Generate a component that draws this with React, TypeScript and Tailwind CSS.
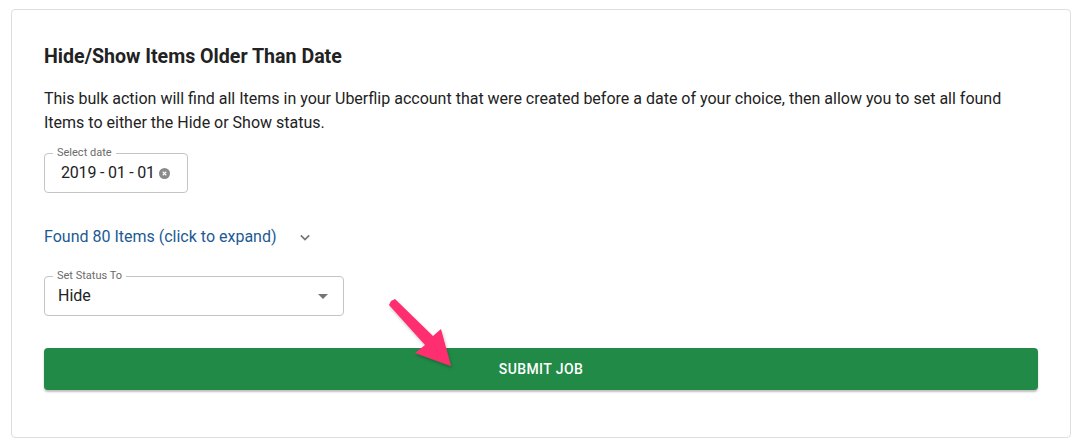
import React from "react";

const font = { fontFamily: "Roboto, 'Noto Sans', Arial, sans-serif" };

function OutlinedField({
  label,
  width,
  children,
}: {
  label: string;
  width: string;
  children: React.ReactNode;
}) {
  return (
    <div className={`relative h-[40px] rounded border border-[#c4c4c4] ${width}`}>
      <span className="absolute -top-[8px] left-[8px] bg-white px-[4px] text-[11px] leading-[14px] text-[#6b6b6b]">
        {label}
      </span>
      <div className="flex h-full items-center">{children}</div>
    </div>
  );
}

export default function App() {
  return (
    <div className="relative min-h-[446px] bg-white pl-[11px] pt-[9px]" style={font}>
      <div className="h-[429px] w-[1060px] rounded border border-[#dedede] px-[32px] pt-[35px]">
        <h2 className="text-[19.6px] font-bold leading-[24px] text-[#222]">Hide/Show Items Older Than Date</h2>
        <p className="mt-[18px] text-[16px] leading-[24px] text-[#222]">
          This bulk action will find all Items in your Uberflip account that were created before a date of your choice,
          then allow you to set all found Items to either the Hide or Show status.
        </p>

        <div className="mt-[18px]">
          <OutlinedField label="Select date" width="w-[144px]">
            <span className="pl-[16px] text-[16px] tracking-[-0.2px] text-[#222]">2019 - 01 - 01</span>
            <span className="ml-[4px] flex h-[11px] w-[11px] items-center justify-center rounded-full bg-[#8a8a8a]">
              <svg viewBox="0 0 10 10" className="h-[7px] w-[7px]">
                <path d="M2.5 2.5 L7.5 7.5 M7.5 2.5 L2.5 7.5" stroke="#fff" strokeWidth="1.6" />
              </svg>
            </span>
          </OutlinedField>
        </div>

        <div className="mt-[32px] flex h-[24px] items-center">
          <span className="text-[16px] leading-[24px] text-[#1c5a94]">Found 80 Items (click to expand)</span>
          <svg viewBox="0 0 24 24" className="ml-[18px] h-[20px] w-[20px]" fill="none">
            <path d="M7 10l5 5 5-5" stroke="#757575" strokeWidth="2" />
          </svg>
        </div>

        <div className="mt-[27px]">
          <OutlinedField label="Set Status To" width="w-[300px]">
            <span className="flex-1 pl-[13px] text-[16px] text-[#222]">Hide</span>
            <svg viewBox="0 0 10 5" className="mr-[15px] h-[5px] w-[10px]">
              <path d="M0 0h10L5 5z" fill="#757575" />
            </svg>
          </OutlinedField>
        </div>

        <button
          type="button"
          className="mt-[32px] flex h-[42px] w-full items-center justify-center rounded bg-[#218a47] text-[14px] font-medium tracking-[0.4px] text-white shadow-[0_2px_2px_rgba(0,0,0,0.25)]"
        >
          SUBMIT JOB
        </button>
      </div>

      <svg className="pointer-events-none absolute left-0 top-0" width="1080" height="446">
        <defs>
          <filter id="sh" x="-20%" y="-20%" width="140%" height="140%">
            <feDropShadow dx="1" dy="2" stdDeviation="1.5" floodColor="#000" floodOpacity="0.25" />
          </filter>
        </defs>
        <path
          d="M391 301 L395 299 L433 336 L441 329 L451 366 L415 353 L425 345 L389 305 Z"
          fill="#ff2d6f"
          filter="url(#sh)"
        />
      </svg>
    </div>
  );
}
